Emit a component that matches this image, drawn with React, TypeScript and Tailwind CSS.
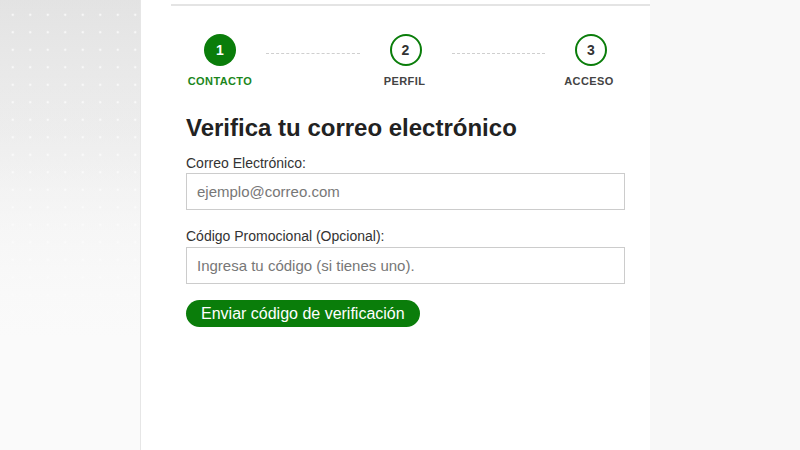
import React from 'react';

const steps = [
  { n: '1', label: 'CONTACTO', active: true },
  { n: '2', label: 'PERFIL', active: false },
  { n: '3', label: 'ACCESO', active: false },
];

function Circle({ n, active }: { n: string; active: boolean }) {
  return (
    <div className="w-[68px] flex justify-center">
      {active ? (
        <div className="w-8 h-8 rounded-full bg-[#0a7d0a] text-white flex items-center justify-center text-[14px] font-bold">{n}</div>
      ) : (
        <div className="w-8 h-8 rounded-full border-2 border-[#0a7d0a] text-[#333] flex items-center justify-center text-[14px] font-bold">{n}</div>
      )}
    </div>
  );
}

export default function App() {
  return (
    <div className="flex w-[800px] h-[450px] font-['Liberation_Sans',Arial,sans-serif] bg-[#f8f8f8]">
      {/* left decorative panel */}
      <div className="w-[141px] h-full border-r border-[#e6e6e6] bg-[linear-gradient(to_bottom,rgba(250,250,250,0.2)_0%,rgba(250,250,250,0.3)_30%,#fafafa_75%),radial-gradient(circle,rgba(255,255,255,0.75)_1px,transparent_1.6px),linear-gradient(to_bottom,#dddddd,#f1f1f1_55%,#fafafa)] bg-[length:100%_100%,17.5px_17.5px,100%_100%] bg-[position:0_0,4px_6px,0_0]" />

      {/* main */}
      <div className="w-[509px] h-full bg-white pl-[30px]">
        <div className="h-[2px] mt-1 bg-[#e4e4e4]" />
        <div className="pl-[15px] pr-[25px]">
          <div className="flex items-center mt-[28px]">
            <Circle n="1" active />
            <div className="flex-1 mx-3 border-t border-dashed border-[#cfcfcf] mt-[6px]" />
            <Circle n="2" active={false} />
            <div className="flex-1 mx-3 border-t border-dashed border-[#cfcfcf] mt-[6px]" />
            <Circle n="3" active={false} />
          </div>
          <div className="flex justify-between mt-[9px] w-[437px]">
            {steps.map((s) => (
              <div key={s.n} className={`w-[68px] text-center text-[11px] leading-[13px] font-bold tracking-[0.4px] ${s.active ? 'text-[#1b861b]' : 'text-[#444]'}`}>
                {s.label}
              </div>
            ))}
          </div>

          <h1 className="mt-[25px] text-[24px] leading-[29px] font-bold text-[#222]">Verifica tu correo electrónico</h1>

          <label className="block mt-[13px] text-[14px] leading-[16px] text-[#333]">Correo Electrónico:</label>
          <input
            className="mt-[2px] block w-full h-[37px] border border-[#cccccc] px-[10px] text-[15px] text-[#333] placeholder:text-[#777] outline-none"
            placeholder="ejemplo@correo.com"
          />

          <label className="block mt-[18px] text-[14px] leading-[16px] text-[#333]">Código Promocional (Opcional):</label>
          <input
            className="mt-[3px] block w-full h-[37px] border border-[#cccccc] px-[10px] text-[15px] text-[#333] placeholder:text-[#777] outline-none"
            placeholder="Ingresa tu código (si tienes uno)."
          />

          <button className="mt-4 h-[27px] px-[15px] rounded-full bg-[#0a7d0a] text-white text-[16px] leading-[27px]">
            Enviar código de verificación
          </button>
        </div>
      </div>

      {/* right */}
      <div className="flex-1 h-full bg-[#f8f8f8]" />
    </div>
  );
}
